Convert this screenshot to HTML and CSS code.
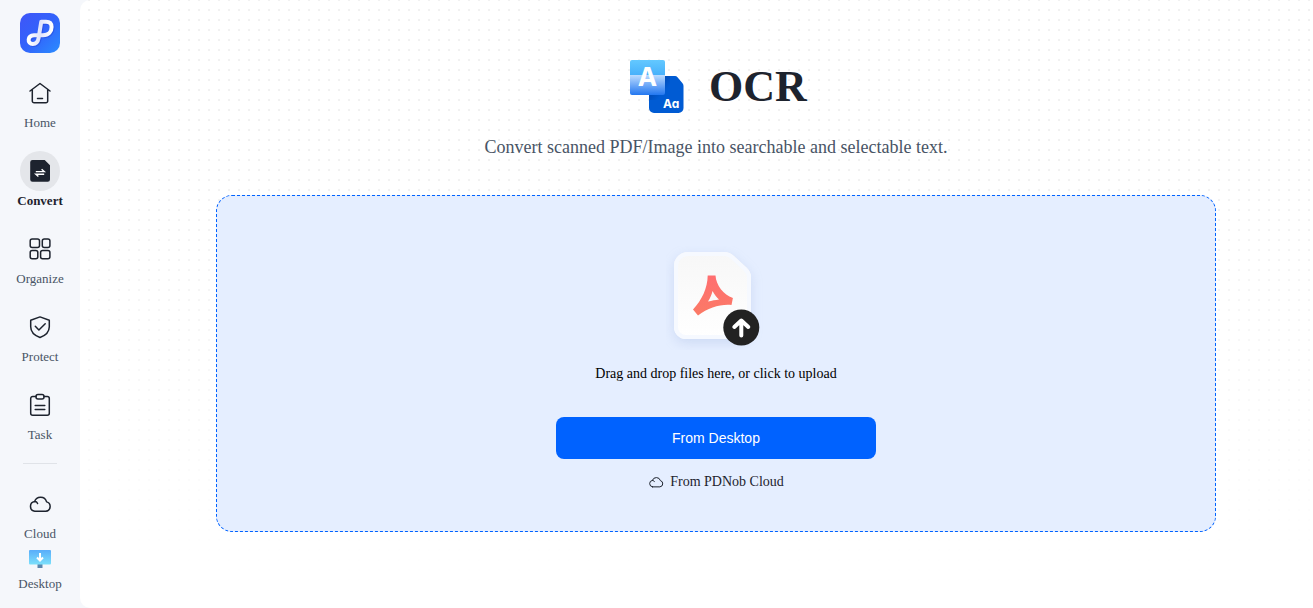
FILE: index.html
```html
<!DOCTYPE html>
<html lang="en">
<head>
    <meta charset="UTF-8">
    <meta name="viewport" content="width=device-width, initial-scale=1.0">
    <title>OCR</title>
    <link rel="stylesheet" href="styles.css">
</head>
<body>
    <aside class="sidebar">
        <a class="logo" href="#" aria-label="PDNob">
            <svg width="40" height="40" viewBox="0 0 40 40">
                <defs>
                    <linearGradient id="logo-bg" x1="0" y1="0" x2="1" y2="1">
                        <stop offset="0" stop-color="#3f55f8"/>
                        <stop offset="0.5" stop-color="#3263fb"/>
                        <stop offset="1" stop-color="#2b8dff"/>
                    </linearGradient>
                    <linearGradient id="logo-line" x1="0" y1="0" x2="1" y2="0">
                        <stop offset="0" stop-color="#ffffff"/>
                        <stop offset="0.5" stop-color="#dfe3fb"/>
                        <stop offset="1" stop-color="#ffffff"/>
                    </linearGradient>
                </defs>
                <rect width="40" height="40" rx="10" fill="url(#logo-bg)"/>
                <path d="M21.200 9L18.600 25C17.800 29.500 15.500 31 12.800 31C10 31 8.400 29 8.700 26.500C9 23.500 11 22.300 14 22.200H23C28.500 22.200 31.600 18.500 31.600 14C31.600 10.500 29.500 8.700 26 8.700H21.200" fill="none" stroke="#203fd0" stroke-opacity=".4" stroke-width="4" transform="translate(1 1)"/>
                <path d="M21.200 9L18.600 25C17.800 29.500 15.500 31 12.800 31C10 31 8.400 29 8.700 26.500C9 23.500 11 22.300 14 22.200H23C28.500 22.200 31.600 18.500 31.600 14C31.600 10.500 29.500 8.700 26 8.700H21.200" fill="none" stroke="url(#logo-line)" stroke-width="4" stroke-linecap="round" stroke-linejoin="round"/>
            </svg>
        </a>

        <nav class="menu">
            <a class="menu-item" href="#">
                <span class="menu-icon">
                    <svg class="line" width="24" height="24" viewBox="0 0 24 24">
                        <path d="M2 10L12 2.500 22 10M4.300 8.500v11.500a1.800 1.800 0 0 0 1.800 1.800h11.800a1.800 1.800 0 0 0 1.800-1.800V8.500M9.500 17.500h5"/>
                    </svg>
                </span>
                <span class="menu-label">Home</span>
            </a>
            <a class="menu-item active" href="#">
                <span class="menu-icon">
                    <svg width="24" height="24" viewBox="0 0 24 24">
                        <path d="M4.500 1h12.200L22 6.300v14.200a2.300 2.300 0 0 1-2.300 2.300H4.500a2.300 2.300 0 0 1-2.300-2.300V3.300A2.300 2.300 0 0 1 4.500 1z" fill="#1d232e"/>
                        <path d="M7.800 12.600h8.400l-2.600-2.300M16.200 15.300H7.800l2.600 2.300" fill="none" stroke="#fff" stroke-width="1.400"/>
                    </svg>
                </span>
                <span class="menu-label">Convert</span>
            </a>
            <a class="menu-item" href="#">
                <span class="menu-icon">
                    <svg class="line" width="24" height="24" viewBox="0 0 24 24">
                        <rect x="2.200" y="2" width="9.300" height="8.600" rx="2"/>
                        <rect x="14.300" y="2" width="7.600" height="8.600" rx="2"/>
                        <rect x="2.200" y="13.500" width="7.600" height="8.300" rx="2"/>
                        <rect x="12.600" y="13.500" width="9.300" height="8.300" rx="2"/>
                    </svg>
                </span>
                <span class="menu-label">Organize</span>
            </a>
            <a class="menu-item" href="#">
                <span class="menu-icon">
                    <svg class="line" width="24" height="24" viewBox="0 0 24 24">
                        <path d="M12 1.900l9.300 3.300v6.600c0 5-4 8.800-9.300 10.700-5.300-1.900-9.300-5.700-9.300-10.700V5.200z"/>
                        <path d="M7.300 11.300l3.600 3.700 6.300-6.300"/>
                    </svg>
                </span>
                <span class="menu-label">Protect</span>
            </a>
            <a class="menu-item" href="#">
                <span class="menu-icon">
                    <svg class="line" width="24" height="24" viewBox="0 0 24 24">
                        <path d="M8 3.500H4.700a2 2 0 0 0-2 2v14.700a2 2 0 0 0 2 2h14.600a2 2 0 0 0 2-2V5.500a2 2 0 0 0-2-2H16"/>
                        <rect x="8" y="1.500" width="8" height="4.500" rx="2"/>
                        <path d="M7.200 12.500h9.600M7.200 16.500h9.600"/>
                    </svg>
                </span>
                <span class="menu-label">Task</span>
            </a>
        </nav>

        <hr class="divider">

        <nav class="menu-bottom">
            <a class="menu-item" href="#">
                <span class="menu-icon">
                    <svg class="line" width="24" height="24" viewBox="0 0 24 24">
                        <path d="M6.800 19.300h11a4.800 4.800 0 0 0 .8-9.400A6.300 6.300 0 0 0 6.600 9.600a4.900 4.900 0 0 0 .2 9.700zM6.600 9.600c1.500 0 2.500.6 3 1.900"/>
                    </svg>
                </span>
                <span class="menu-label">Cloud</span>
            </a>
            <a class="menu-item desktop" href="#">
                <svg width="24" height="20" viewBox="0 0 24 20">
                    <defs>
                        <linearGradient id="screen" x1="0" y1="0" x2="0" y2="1">
                            <stop offset="0" stop-color="#59adfa"/>
                            <stop offset="1" stop-color="#7be0fb"/>
                        </linearGradient>
                    </defs>
                    <path d="M9.500 15h5v4h-5z" fill="#5b86ad"/>
                    <rect x="1" y="1" width="22" height="14.500" rx="1" fill="url(#screen)"/>
                    <path d="M12 4v7.500M9 8.500l3 3 3-3" fill="none" stroke="#fff" stroke-width="2"/>
                </svg>
                <span class="menu-label">Desktop</span>
            </a>
        </nav>
    </aside>

    <main class="main">
        <header class="heading">
            <svg width="56" height="56" viewBox="0 0 56 56">
                <defs>
                    <linearGradient id="tile-top" x1="0" y1="0" x2="0" y2="1">
                        <stop offset="0" stop-color="#63c8ff"/>
                        <stop offset="1" stop-color="#48b1fb"/>
                    </linearGradient>
                    <linearGradient id="tile-bottom" x1="0" y1="0" x2="0" y2="1">
                        <stop offset="0" stop-color="#bcdcff"/>
                        <stop offset="1" stop-color="#2377f0"/>
                    </linearGradient>
                    <linearGradient id="tile-shade" x1="0" y1="0" x2="1" y2="1">
                        <stop offset="0.400" stop-color="#003c9e"/>
                        <stop offset="0.700" stop-color="#005bd3"/>
                    </linearGradient>
                </defs>
                <path d="M24 17h22q1.500 0 2.500 1.200l5 6q1 1.200 1 2.800v22a5 5 0 0 1-5 5H25a5 5 0 0 1-5-5V21z" fill="#005bd3"/>
                <path d="M36 17h5v20a4 4 0 0 1-4 4H20v-5h16z" fill="url(#tile-shade)" opacity=".5"/>
                <path d="M3 1h31a2 2 0 0 1 2 2v13H1V3a2 2 0 0 1 2-2z" fill="url(#tile-top)"/>
                <path d="M1 16h35v18a2 2 0 0 1-2 2H3a2 2 0 0 1-2-2z" fill="url(#tile-bottom)"/>
                <text class="icon-letter" x="18.500" y="27" text-anchor="middle">A</text>
                <text class="icon-text" x="34" y="49">Aa</text>
            </svg>
            <h1>OCR</h1>
        </header>
        <p class="subtitle">Convert scanned PDF/Image into searchable and selectable text.</p>

        <section class="dropzone">
            <svg class="file-icon" width="100" height="104" viewBox="0 0 100 104">
                <defs>
                    <linearGradient id="paper" x1="0" y1="0" x2="0" y2="1">
                        <stop offset="0" stop-color="#f7f7f7"/>
                        <stop offset="1" stop-color="#ffffff"/>
                    </linearGradient>
                    <linearGradient id="mark" x1="0" y1="0" x2="0" y2="1">
                        <stop offset="0" stop-color="#ff6e70"/>
                        <stop offset="1" stop-color="#fb7a66"/>
                    </linearGradient>
                </defs>
                <path class="paper" d="M22 6h36q6 0 10 4l13 12q4 4 4 9v50a12 12 0 0 1-12 12H20a12 12 0 0 1-12-12V20a14 14 0 0 1 14-14z" fill="url(#paper)"/>
                <path d="M22 8h36q5 0 9 4l12 11q4 4 4 8v49a10 10 0 0 1-10 11H20a10 10 0 0 1-10-10V20a12 12 0 0 1 12-12z" fill="none" stroke="#f6f9ff" stroke-width="4"/>
                <path d="M41.700 29.500h7.800C50 39 57.500 49 66.900 52L65.500 59c-11-1-23 2.500-33.500 10.500L27 63.500C36 54 41.500 42 41.700 29.500zM46.500 45c-.8 3.800-2.300 7-4.500 10.500 4-.9 7.500-1.500 11-2-2.500-2.400-4.500-5-6.500-8.500z" fill="url(#mark)" fill-rule="evenodd"/>
                <circle cx="75.300" cy="81.500" r="18" fill="#222"/>
                <path d="M75.300 89.500V75M68.300 81l7-6.500 7 6.500" fill="none" stroke="#fff" stroke-width="4" stroke-linecap="round" stroke-linejoin="round"/>
            </svg>
            <p class="hint">Drag and drop files here, or click to upload</p>
            <button class="btn-desktop" type="button">From Desktop</button>
            <button class="btn-cloud" type="button">
                <svg class="line" width="16" height="16" viewBox="0 0 24 24">
                    <path d="M6.800 19.300h11a4.800 4.800 0 0 0 .8-9.400A6.300 6.300 0 0 0 6.600 9.600a4.900 4.900 0 0 0 .2 9.700zM6.600 9.600c1.500 0 2.500.6 3 1.900"/>
                </svg>
                From PDNob Cloud
            </button>
        </section>
    </main>
</body>
</html>
```

FILE: styles.css
```css
* {
    box-sizing: border-box;
}

body {
    margin: 0;
    min-height: 100vh;
    display: flex;
    font-family: "Liberation Serif", serif;
    background: #f5f7fb;
    color: #1d232e;
}

h1,
p {
    margin: 0;
}

svg {
    display: block;
    flex-shrink: 0;
}

.line {
    fill: none;
    stroke: #1d232e;
    stroke-width: 1.5px;
    stroke-linecap: round;
    stroke-linejoin: round;
}

.sidebar {
    width: 80px;
    flex-shrink: 0;
    padding-top: 13px;
    display: flex;
    flex-direction: column;
    align-items: center;
}

.menu {
    display: flex;
    flex-direction: column;
    gap: 18px;
    margin-top: 20px;
}

.menu-bottom {
    display: flex;
    flex-direction: column;
    gap: 5px;
}

.menu-item {
    display: flex;
    flex-direction: column;
    align-items: center;
    color: #485465;
    text-decoration: none;
}

.menu-icon {
    width: 40px;
    height: 40px;
    display: flex;
    justify-content: center;
    align-items: center;
    border-radius: 50%;
}

.menu-label {
    font-size: 13px;
    line-height: 20px;
}

.menu-item.active .menu-icon {
    background: #e4e6ea;
}

.menu-item.active .menu-label {
    color: #1d232e;
    font-weight: bold;
}

.menu-item.desktop {
    gap: 5px;
}

.divider {
    width: 34px;
    margin: 18px 0 20px;
    border: 0;
    border-top: 1px solid #e0e3e8;
}

/* dotted canvas that fades out towards the bottom */
.main {
    flex: 1;
    padding: 56px 0 56px 39px;
    display: flex;
    flex-direction: column;
    align-items: center;
    border-radius: 10px 0 0 10px;
    background:
        linear-gradient(rgba(255, 255, 255, 0) 25%, #fff 98%),
        conic-gradient(at 2px 2px, transparent 75%, #f1f1f1 0) -2px -1px / 10px 10px,
        #fff;
}

.heading {
    display: flex;
    align-items: center;
    gap: 24px;
    padding-left: 4px;
}

.heading h1 {
    font-size: 44px;
    line-height: 62px;
}

.icon-letter,
.icon-text {
    font-family: Inter, sans-serif;
    font-weight: bold;
    fill: #fff;
}

.icon-letter {
    font-size: 26px;
}

.icon-text {
    font-size: 12px;
    font-feature-settings: "cv11";
}

.subtitle {
    margin-top: 16px;
    font-size: 18px;
    line-height: 26px;
    color: #485465;
}

.dropzone {
    width: 100%;
    max-width: 1000px;
    margin-top: 35px;
    padding: 50px 20px 39px;
    display: flex;
    flex-direction: column;
    align-items: center;
    border: 1px dashed #0062ff;
    border-radius: 16px;
    background: #e5eeff;
}

.paper {
    filter: drop-shadow(0 4px 6px rgba(110, 140, 200, 0.2));
}

.hint {
    margin-top: 14px;
    font-size: 14px;
    line-height: 20px;
    color: #000;
}

.btn-desktop {
    width: 320px;
    max-width: 100%;
    height: 42px;
    margin-top: 33px;
    border: 0;
    border-radius: 8px;
    background: #0062ff;
    color: #fff;
    font-family: "Liberation Sans", sans-serif;
    font-size: 14px;
    cursor: pointer;
}

.btn-cloud {
    display: flex;
    align-items: center;
    gap: 6px;
    margin-top: 13px;
    padding: 0;
    border: 0;
    background: none;
    color: #1d232e;
    font-family: inherit;
    font-size: 14px;
    line-height: 20px;
    cursor: pointer;
}
```
